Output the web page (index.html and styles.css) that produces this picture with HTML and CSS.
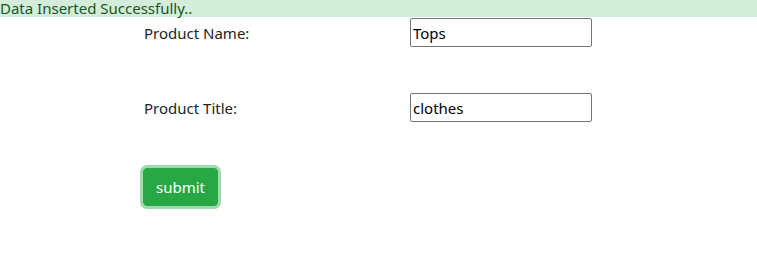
FILE: index.html
```html
<!DOCTYPE html>
<html>
<head>
<meta charset="utf-8">
<link rel="stylesheet" href="styles.css">
</head>
<body>
<div class="alert"><span class="alert-text">Data Inserted Successfully..</span></div>
<form class="form">
  <label class="label" for="name">Product Name:</label>
  <input class="field" id="name" type="text" value="Tops">
  <label class="label" for="title">Product Title:</label>
  <input class="field" id="title" type="text" value="clothes">
  <div class="actions"><button class="btn" type="button">submit</button></div>
</form>
</body>
</html>
```
FILE: styles.css
```css
html, body {
  margin: 0;
  padding: 0;
  background: #fff;
}
body {
  font-family: "Noto Sans", "Open Sans", sans-serif;
  font-size: 15px;
  color: #212529;
}
.alert {
  background: #d4edda;
  color: #155724;
  height: 17px;
  display: flex;
  align-items: center;
  white-space: nowrap;
}
.alert-text {
  line-height: 20px;
  margin-top: -1px;
}
.form {
  display: grid;
  grid-template-columns: 266px 182px;
  grid-template-rows: 29px 29px 43px;
  row-gap: 46px;
  margin: 1px 0 0 144px;
  align-items: center;
}
.label {
  line-height: 22px;
}
.field {
  box-sizing: border-box;
  width: 182px;
  height: 29px;
  border: 1px solid #767676;
  border-radius: 2px;
  padding: 1px 2px;
  font-family: inherit;
  font-size: 15px;
  color: #000;
  background: #fff;
}
.actions {
  grid-column: 1 / 3;
  display: flex;
  align-self: start;
  margin-left: -1px;
}
.btn {
  font-family: inherit;
  font-size: 15px;
  line-height: 22px;
  padding: 7px 12px;
  color: #fff;
  background: #28a745;
  border: 1px solid #28a745;
  border-radius: 4px;
  box-shadow: 0 0 0 3px rgba(72, 180, 97, 0.5);
}
```
